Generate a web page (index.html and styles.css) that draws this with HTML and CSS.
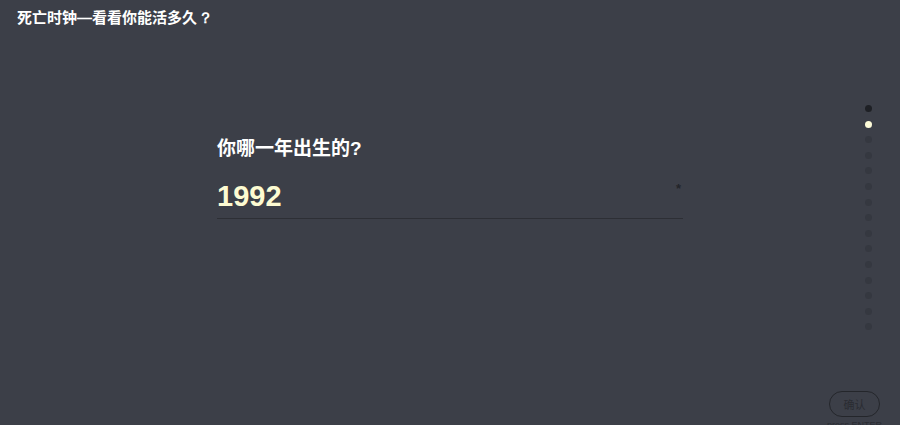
FILE: index.html
```html
<!DOCTYPE html>
<html lang="zh">
<head>
<meta charset="utf-8">
<title>死亡时钟</title>
<link rel="stylesheet" href="styles.css">
</head>
<body>
<header class="site-header">
  <h1 class="site-title">死亡时钟—看看你能活多久<span class="fw-mark">？</span></h1>
</header>
<main class="stage">
  <section class="question">
    <h2 class="question-label">你哪一年出生的?</h2>
    <div class="answer-field">
      <span class="answer-value">1992</span>
      <span class="required-mark">*</span>
    </div>
  </section>
</main>
<nav class="step-dots">
  <span class="dot dot-done"></span>
  <span class="dot dot-active"></span>
  <span class="dot"></span>
  <span class="dot"></span>
  <span class="dot"></span>
  <span class="dot"></span>
  <span class="dot"></span>
  <span class="dot"></span>
  <span class="dot"></span>
  <span class="dot"></span>
  <span class="dot"></span>
  <span class="dot"></span>
  <span class="dot"></span>
  <span class="dot"></span>
  <span class="dot"></span>
</nav>
<div class="confirm">
  <button class="confirm-btn">确认</button>
  <span class="confirm-hint">press ENTER</span>
</div>
</body>
</html>
```
FILE: styles.css
```css
html, body {
  margin: 0;
  padding: 0;
  height: 100%;
}
body {
  background: #3c3f48;
  font-family: "Liberation Sans", "Noto Sans CJK SC", sans-serif;
  color: #fff;
  overflow: hidden;
  position: relative;
}
.site-header {
  padding: 8px 17px 0;
}
.site-title {
  margin: 0;
  font-family: "Liberation Sans", "Noto Sans CJK SC", sans-serif;
  font-size: 15px;
  line-height: 20px;
  font-weight: bold;
  color: #fff;
}
.fw-mark {
  display: inline-block;
  width: 1.1em;
  text-align: center;
  font-family: "Liberation Sans", sans-serif;
}
.stage {
  display: flex;
  justify-content: center;
  padding-top: 109px;
}
.question {
  width: 466px;
}
.question-label {
  margin: 0;
  font-size: 19px;
  line-height: 24px;
  font-weight: bold;
  color: #fff;
}
.answer-field {
  position: relative;
  margin-top: 13px;
  border-bottom: 1px solid #2d2f35;
  height: 44px;
  display: flex;
  align-items: center;
}
.answer-value {
  font-size: 29px;
  font-weight: bold;
  color: #fdfbd2;
  line-height: 36px;
}
.required-mark {
  position: absolute;
  right: 2px;
  top: 7px;
  font-size: 13px;
  color: #23252a;
  font-weight: bold;
}
.step-dots {
  position: absolute;
  right: 28px;
  top: 105px;
  display: flex;
  flex-direction: column;
  gap: 8.6px;
}
.dot {
  display: block;
  width: 7px;
  height: 7px;
  border-radius: 50%;
  background: #353840;
}
.dot-done {
  background: #1e2025;
}
.dot-active {
  background: #fdfbd8;
}
.confirm {
  position: absolute;
  right: 18px;
  top: 391px;
  display: flex;
  flex-direction: column;
  align-items: center;
}
.confirm-btn {
  width: 51px;
  height: 26px;
  border: 1.5px solid #24262b;
  border-radius: 13px;
  background: transparent;
  color: #2a2c32;
  font-family: "Noto Sans CJK SC", sans-serif;
  font-size: 11px;
  padding: 0;
}
.confirm-hint {
  margin-top: 3px;
  font-size: 9px;
  color: #2a2c32;
}
```
